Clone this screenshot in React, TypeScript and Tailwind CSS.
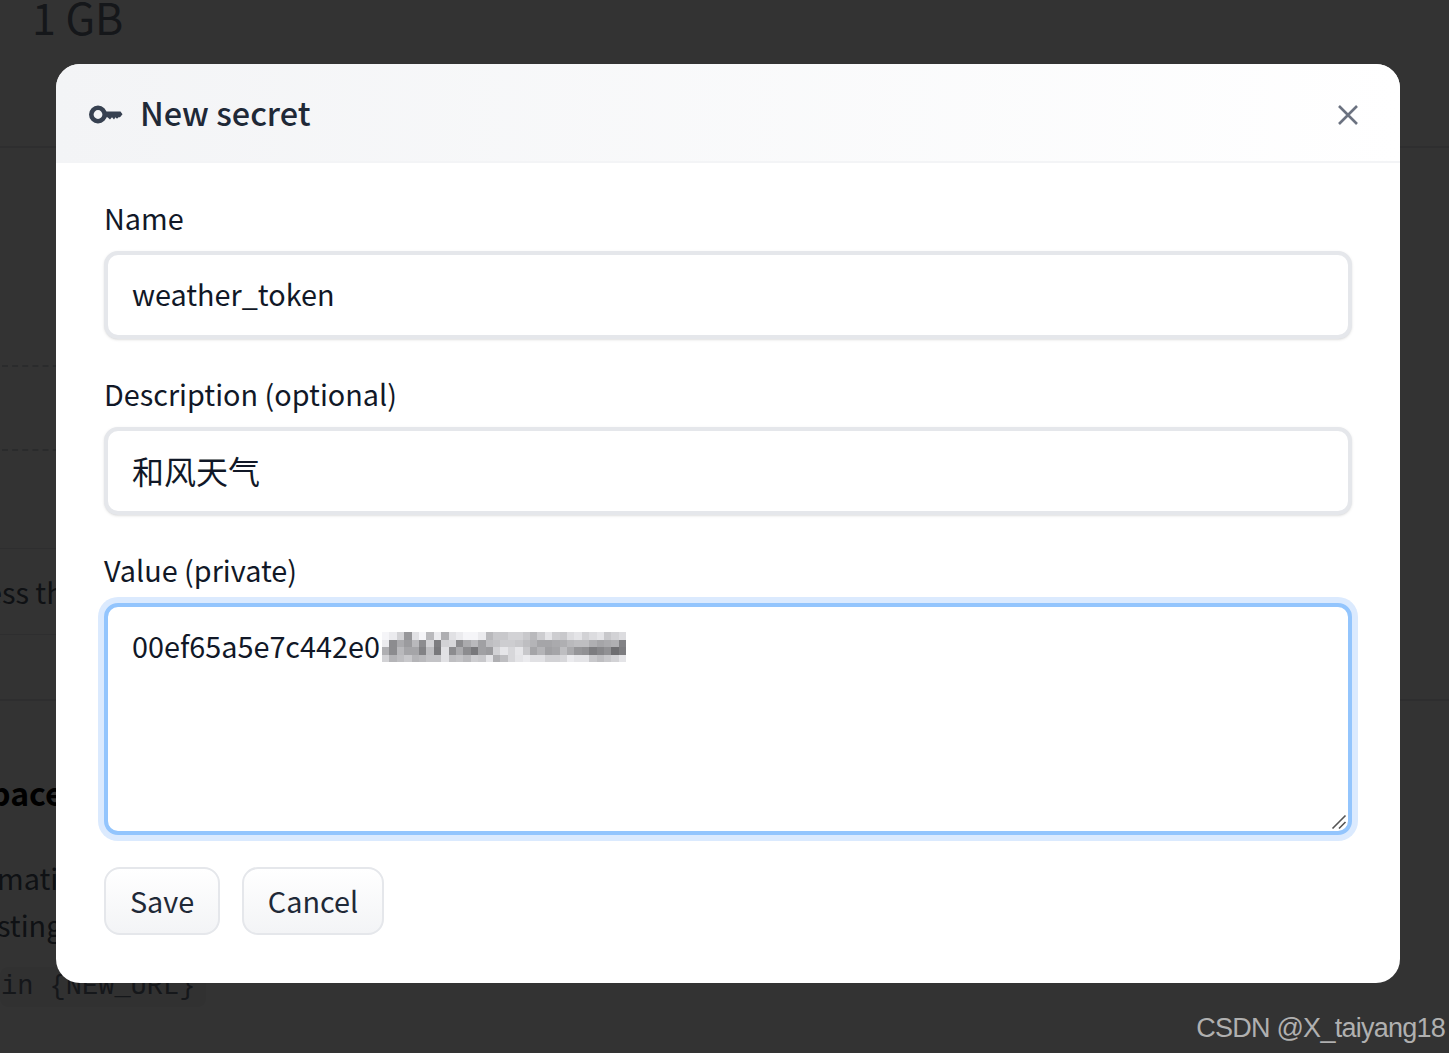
import React from 'react';

const sans = 'font-["Noto_Sans_CJK_SC","Noto_Sans",sans-serif]';

// the blurred-out part of the token: four rows of grey cells
const mosaic = [
  [245, 235, 210, 150, 225, 245, 185, 235, 175, 225, 235, 245, 245, 235, 185, 200, 200, 210, 210, 200, 185, 205, 228, 205, 200, 220, 228, 210, 220, 228, 200, 210, 220],
  [235, 140, 170, 155, 185, 140, 210, 125, 210, 215, 140, 170, 185, 160, 190, 195, 205, 205, 200, 190, 180, 165, 165, 170, 175, 185, 190, 190, 175, 165, 170, 175, 130],
  [175, 140, 185, 165, 165, 130, 190, 120, 225, 140, 170, 140, 120, 160, 155, 210, 230, 215, 230, 200, 165, 180, 160, 165, 190, 170, 150, 145, 125, 135, 145, 110, 125],
  [210, 180, 190, 200, 180, 185, 195, 195, 225, 190, 195, 185, 205, 200, 228, 175, 190, 215, 228, 235, 225, 225, 210, 210, 215, 235, 228, 228, 200, 190, 200, 210, 228],
];

const Mosaic = () => (
  <svg className="absolute left-[278px] top-[29px]" width="244" height="30" viewBox="0 0 244 30" shapeRendering="crispEdges">
    {mosaic.map((row, y) =>
      row.map((v, x) => <rect key={`${x}-${y}`} x={x * 7.4} y={y * 7.5} width="7.4" height="7.5" fill={`rgb(${v},${v},${v + 3})`} />),
    )}
  </svg>
);

const KeyIcon = () => (
  <svg width="34" height="22" viewBox="0 0 34 22" className="shrink-0 mt-[5px]">
    <circle cx="9" cy="10.5" r="6.7" fill="none" stroke="#374151" strokeWidth="4.6" />
    <path d="M15 7.5h16.5l2 2.8-2.5 3h-1.5l-1.5 1.4-1.5-1.4-1.5 2.2-2-2.2-2 2.2-2.5-2.2H15z" fill="#374151" />
  </svg>
);

const inputClass =
  'w-full h-[88px] rounded-[14px] border-4 border-[#e5e7eb] bg-white px-6 pb-[3px] text-[#111827] outline-none shadow-sm';

const Label = ({ children }: { children: React.ReactNode }) => (
  <label className="block h-[44px] mb-[9px] text-[28.8px] leading-[40px] text-[#111827]">{children}</label>
);

const buttonClass =
  'h-[68px] rounded-[16px] border-2 border-[#e5e7eb] bg-gradient-to-b from-white to-[#f3f4f6] text-[28.8px] text-[#1f2937]';

export default function App() {
  return (
    <div className={`relative h-[1053px] overflow-hidden bg-white ${sans}`}>
      {/* page behind the dialog */}
      <div className="flex h-[148px] items-start border-b-2 border-gray-200 px-8">
        <div className="-mt-[14px] text-[43px] leading-[60px] text-gray-500">1 GB</div>
      </div>
      <div className="h-[553px] border-b-2 border-gray-200">
        <div className="ml-[2px] w-[300px] h-[219px] border-b-2 border-dashed border-gray-300" />
        <div className="ml-[2px] w-[300px] h-[84px] border-b-2 border-dashed border-gray-300" />
        <div className="w-[300px] h-[98px] border-b border-gray-200" />
        <div className="w-[300px] h-[86px] border-b border-gray-200 whitespace-nowrap text-[28.8px] leading-[86px] text-gray-600">
          <div className="-ml-[14px]">ess the</div>
        </div>
      </div>
      <div className="flex flex-col pt-[68px] whitespace-nowrap">
        <div className="-ml-[30px] text-[32px] font-bold leading-[46px] text-black">Space</div>
        <div className="mt-[39px] -ml-[3px] text-[28.8px] leading-[48px] text-gray-600">mation</div>
        <div className="-ml-[19px] -mt-[1px] text-[28.8px] leading-[48px] text-gray-600">esting</div>
        <div className="mt-[18px] w-[206px] rounded-lg bg-gray-100 pl-[1px] font-['Liberation_Mono',monospace] text-[27px] leading-[40px] text-gray-500">
          in {'{NEW_URL}'}
        </div>
      </div>

      {/* overlay */}
      <div className="absolute inset-0 bg-black/80 pl-[56px] pt-[64px]">
        <div className="w-[1344px] h-[919px] overflow-hidden rounded-[24px] bg-white">
          <div className="flex h-[99px] items-center justify-between border-b-2 border-gray-100 bg-gradient-to-r from-[#f3f4f6] to-white pl-[33px] pr-[42px]">
            <div className="flex items-center gap-[17px]">
              <KeyIcon />
              <h2 className="-mt-[2px] text-[32.4px] font-medium leading-[48px] text-[#1f2937]">New secret</h2>
            </div>
            <svg width="20" height="20" viewBox="0 0 20 20" className="mt-[4px]">
              <path d="M1 1l18 18M19 1L1 19" stroke="#6b7280" strokeWidth="2.6" fill="none" />
            </svg>
          </div>
          <div className="px-12 pt-[35px]">
            <Label>Name</Label>
            <input className={`${inputClass} text-[28.8px]`} defaultValue="weather_token" readOnly />
            <div className="mt-[35px]">
              <Label>Description (optional)</Label>
              <input className={`${inputClass} text-[32px]`} defaultValue="和风天气" readOnly />
            </div>
            <div className="mt-[35px]">
              <Label>Value (private)</Label>
              <div className="relative h-[232px]">
                <textarea
                  className="block w-full h-[232px] resize-none rounded-[14px] border-4 border-[#93c5fd] bg-white px-6 py-[17px] text-[28.8px] leading-[44px] text-[#111827] outline-none ring-[6px] ring-[#dbeafe]"
                  defaultValue="00ef65a5e7c442e0"
                  readOnly
                />
                <Mosaic />
                <svg className="absolute right-[4px] bottom-[3px]" width="18" height="18" viewBox="0 0 18 18">
                  <path d="M15.5 1.5L2.5 14.5M15.5 8L9 14.5" stroke="#555" strokeWidth="1.6" fill="none" />
                </svg>
              </div>
            </div>
            <div className="mt-8 flex gap-[22px]">
              <button className={`${buttonClass} w-[116px]`}>Save</button>
              <button className={`${buttonClass} w-[142px]`}>Cancel</button>
            </div>
          </div>
        </div>
      </div>

      {/* watermark */}
      <div className="absolute right-[4px] bottom-[8px] font-['Liberation_Sans',sans-serif] text-[27px] leading-[34px] tracking-[-0.75px] text-[#b0b0b0]">
        CSDN @X_taiyang18
      </div>
    </div>
  );
}
